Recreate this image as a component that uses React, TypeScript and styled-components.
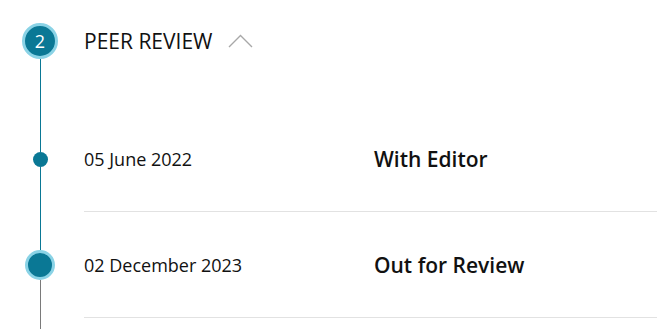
import React from 'react';
import styled, { createGlobalStyle } from 'styled-components';

const GlobalStyle = createGlobalStyle`
  html, body {
    margin: 0;
    padding: 0;
    background: #fff;
    font-family: "Open Sans", "Liberation Sans", sans-serif;
    color: #111;
  }
`;

const TEAL = '#0a7895';
const RING = '#8ad3e6';
const GRAY = '#7a7a7a';

const Timeline = styled.div`
  box-sizing: border-box;
  padding-top: 23px;
  width: 657px;
  height: 329px;
  overflow: hidden;
`;

const Row = styled.div<{ $height: number }>`
  display: flex;
  height: ${p => p.$height}px;
`;

const Rail = styled.div`
  width: 80px;
  flex-shrink: 0;
  display: flex;
  flex-direction: column;
  align-items: center;
  margin-right: 4px;
`;

const Segment = styled.div<{ $color: string }>`
  flex: 1;
  width: 1px;
  background: ${p => p.$color};
`;

const StepBadge = styled.div`
  width: 30px;
  height: 30px;
  border-radius: 50%;
  background: ${TEAL};
  border: 3px solid ${RING};
  color: #fff;
  font-size: 18px;
  display: flex;
  align-items: center;
  justify-content: center;
  flex-shrink: 0;
`;

const Dot = styled.div<{ $current?: boolean }>`
  width: ${p => (p.$current ? 24 : 15)}px;
  height: ${p => (p.$current ? 24 : 15)}px;
  border-radius: 50%;
  background: ${TEAL};
  border: ${p => (p.$current ? `3px solid ${RING}` : 'none')};
  flex-shrink: 0;
`;

const Header = styled.div`
  display: flex;
  align-items: center;
  height: 36px;
  gap: 16px;
`;

const Title = styled.div`
  font-size: 21px;
  text-transform: uppercase;
  color: #111;
`;

const Content = styled.div<{ $divider?: boolean }>`
  flex: 1;
  display: flex;
  align-items: center;
  border-bottom: ${p => (p.$divider ? '1px solid #e2e2e2' : 'none')};
`;

const DateCell = styled.div`
  width: 290px;
  font-size: 18px;
`;

const Status = styled.div`
  font-size: 21px;
  font-weight: 600;
`;

const Chevron = () => (
  <svg width="25" height="14" viewBox="0 0 25 14">
    <polyline points="1,13 12.5,1.5 24,13" fill="none" stroke="#a8a8a8" strokeWidth="1.4" />
  </svg>
);

const events = [
  { date: '05 June 2022', status: 'With Editor', current: false },
  { date: '02 December 2023', status: 'Out for Review', current: true },
];

export default function App() {
  return (
    <>
      <GlobalStyle />
      <Timeline>
        <Row $height={83}>
          <Rail>
            <StepBadge>2</StepBadge>
            <Segment $color={TEAL} />
          </Rail>
          <div>
            <Header>
              <Title>Peer Review</Title>
              <Chevron />
            </Header>
          </div>
        </Row>
        {events.map((e, i) => (
          <Row key={i} $height={106}>
            <Rail>
              <Segment $color={TEAL} />
              <Dot $current={e.current} />
              <Segment $color={e.current ? GRAY : TEAL} />
            </Rail>
            <Content $divider>
              <DateCell>{e.date}</DateCell>
              <Status>{e.status}</Status>
            </Content>
          </Row>
        ))}
        <Row $height={30}>
          <Rail>
            <Segment $color={GRAY} />
          </Rail>
        </Row>
      </Timeline>
    </>
  );
}
